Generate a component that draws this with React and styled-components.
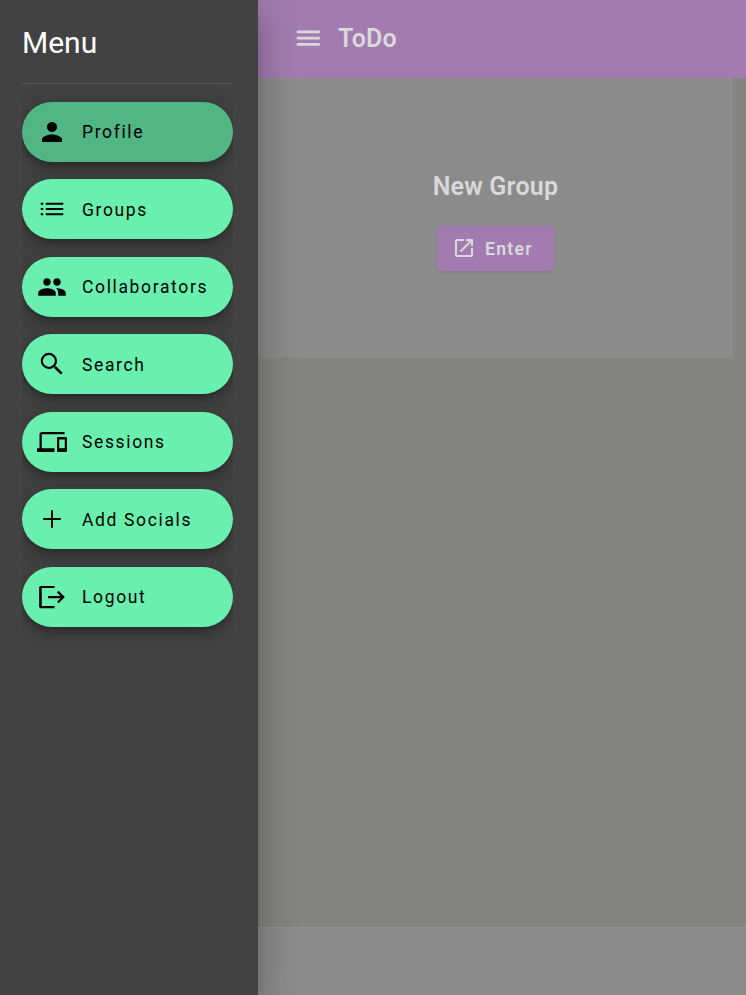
import React from "react";
import styled, { createGlobalStyle } from "styled-components";

const GlobalStyle = createGlobalStyle`
  *, *::before, *::after { box-sizing: border-box; }
  body { margin: 0; font-family: Roboto, "Liberation Sans", sans-serif; }
  h1, h2, p { margin: 0; }
`;

const Layout = styled.div`
  display: grid;
  grid-template-columns: 258px minmax(0, 1fr);
  width: 100%;
  height: 100vh;
  overflow: hidden;
  background: #848482;
`;

const Drawer = styled.nav`
  position: relative;
  z-index: 1;
  display: flex;
  flex-direction: column;
  padding: 22px 25px 0 22px;
  background: #424242;
  box-shadow: 0 10px 12px -6px rgba(0, 0, 0, 0.2),
    0 20px 30px 2px rgba(0, 0, 0, 0.14), 0 7px 37px 6px rgba(0, 0, 0, 0.12);
`;

const DrawerTitle = styled.h2`
  height: 61px;
  color: #fff;
  font-size: 30px;
  font-weight: 400;
  line-height: 41px;
`;

const MenuList = styled.div`
  display: flex;
  flex-direction: column;
  gap: 17.48px;
  padding-top: 18px;
  border-top: 1px solid #5a5a5a;
  overflow-x: clip;
`;

const MenuButton = styled.button`
  display: flex;
  align-items: center;
  gap: 15px;
  width: 100%;
  height: 60px;
  padding: 0 15px;
  border: 0;
  border-radius: 30px;
  color: #000;
  background: ${({ $active }) => ($active ? "#52b684" : "#69f0ae")};
  box-shadow: 0 4px 6px -1px rgba(0, 0, 0, 0.2),
    0 7px 12px rgba(0, 0, 0, 0.14), 0 1px 22px rgba(0, 0, 0, 0.12);
  font: 450 17.5px/24px Roboto, sans-serif;
  letter-spacing: 1.64px;
  white-space: nowrap;
`;

const MenuLabel = styled.span`
  padding-top: 0.4px;
`;

const Icon = styled.svg`
  flex: none;
  width: ${({ $size }) => $size}px;
  height: ${({ $size }) => $size}px;
  fill: currentColor;
`;

const Page = styled.div`
  display: grid;
  grid-template-rows: 78px minmax(0, 1fr) 68px;
  color: #d9d9d9;
`;

const AppBar = styled.header`
  display: flex;
  align-items: center;
  gap: 15px;
  padding: 0 35px;
  background: #a27cb0;

  svg {
    margin-bottom: 2px;
  }
`;

const AppTitle = styled.h1`
  font-size: 25px;
  font-weight: 600;
  line-height: 38px;
  letter-spacing: 0.2px;
`;

const Card = styled.section`
  display: flex;
  flex-direction: column;
  align-items: center;
  gap: 20px;
  width: 475px;
  height: 280px;
  padding-top: 90px;
  background: #8b8b8b;
`;

const CardTitle = styled.h2`
  font-size: 25px;
  font-weight: 600;
  line-height: 38px;
  letter-spacing: 0.22px;
`;

const EnterButton = styled.button`
  display: flex;
  align-items: center;
  gap: 9px;
  width: 117px;
  height: 45px;
  padding: 0 0 0 15px;
  border: 0;
  border-radius: 5px;
  color: #d9d9d9;
  background: #a27cb0;
  box-shadow: 0 2px 3px rgba(0, 0, 0, 0.08);
  font: 600 17.5px/24px Roboto, sans-serif;
  letter-spacing: 1.3px;

  svg {
    margin-bottom: 1px;
  }
`;

const Footer = styled.footer`
  border-top: 1px solid #929292;
  background: #8b8b8b;
`;

const items = [
  ["Profile", "M12 12c2.21 0 4-1.79 4-4s-1.79-4-4-4-4 1.79-4 4 1.79 4 4 4zm0 2c-2.67 0-8 1.34-8 4v2h16v-2c0-2.66-5.33-4-8-4z"],
  ["Groups", "M3 12.8h2v-1.6H3v1.6zm0 4.2h2v-1.6H3V17zm0-8.4h2V7H3v1.6zm4 4.2h14v-1.6H7v1.6zM7 17h14v-1.6H7V17zM7 7v1.6h14V7H7z"],
  ["Collaborators", "M16 11c1.66 0 2.99-1.34 2.99-3S17.66 5 16 5s-3 1.34-3 3 1.34 3 3 3zm-8 0c1.66 0 2.99-1.34 2.99-3S9.66 5 8 5 5 6.34 5 8s1.34 3 3 3zm0 2c-2.33 0-7 1.17-7 3.5V19h14v-2.5c0-2.33-4.67-3.5-7-3.5zm8 0c-.29 0-.62.02-.97.05 1.16.84 1.97 1.97 1.97 3.45V19h6v-2.5c0-2.33-4.67-3.5-7-3.5z"],
  ["Search", "M15.5 14h-.79l-.28-.27A6.47 6.47 0 0 0 16 9.5 6.5 6.5 0 1 0 9.5 16c1.61 0 3.09-.59 4.23-1.57l.27.28v.79l5 4.99L20.49 19l-4.99-5zm-6 .3a4.8 4.8 0 1 1 0-9.6 4.8 4.8 0 0 1 0 9.6z"],
  ["Sessions", "M4 5.8h18V4H4c-1.1 0-2 .9-2 2v11H0v3h14v-3H3.8V5.8zM23 8h-6c-.55 0-1 .45-1 1v10c0 .55.45 1 1 1h6c.55 0 1-.45 1-1V9c0-.55-.45-1-1-1zm-.8 9h-4.4v-7h4.4v7z"],
  ["Add Socials", "M19 12.8h-6.2V19h-1.6v-6.2H5v-1.6h6.2V5h1.6v6.2H19z"],
  ["Logout", "M3 3.1h11v1.7H3.8v14.4H14v1.7H3a1.3 1.3 0 0 1-1.3-1.3V4.4A1.3 1.3 0 0 1 3 3.1zM17.3 7l5 5-5 5-1.3-1.3 2.8-2.8H8.9v-1.8h9.9L16 8.3z"],
];

function Glyph({ path, size = 30 }) {
  return (
    <Icon $size={size} viewBox="0 0 24 24" aria-hidden="true">
      <path d={path} />
    </Icon>
  );
}

export default function App() {
  return (
    <>
      <GlobalStyle />
      <Layout>
        <Drawer>
          <DrawerTitle>Menu</DrawerTitle>
          <MenuList>
            {items.map(([label, path], index) => (
              <MenuButton key={label} $active={index === 0}>
                <Glyph path={path} />
                <MenuLabel>{label}</MenuLabel>
              </MenuButton>
            ))}
          </MenuList>
        </Drawer>
        <Page>
          <AppBar>
            <Glyph path="M3 18.2h18.4v-2.3H3v2.3zm0-5h18.4v-2.3H3v2.3zm0-7.3v2.3h18.4V5.9H3z" />
            <AppTitle>ToDo</AppTitle>
          </AppBar>
          <main>
            <Card>
              <CardTitle>New Group</CardTitle>
              <EnterButton>
                <Glyph
                  size={24}
                  path="M19 19H5V5h7V3H5a2 2 0 0 0-2 2v14a2 2 0 0 0 2 2h14c1.1 0 2-.9 2-2v-7h-2v7zM14 3v2h3.59l-9.83 9.83 1.41 1.41L19 6.41V10h2V3h-7z"
                />
                Enter
              </EnterButton>
            </Card>
          </main>
          <Footer />
        </Page>
      </Layout>
    </>
  );
}
